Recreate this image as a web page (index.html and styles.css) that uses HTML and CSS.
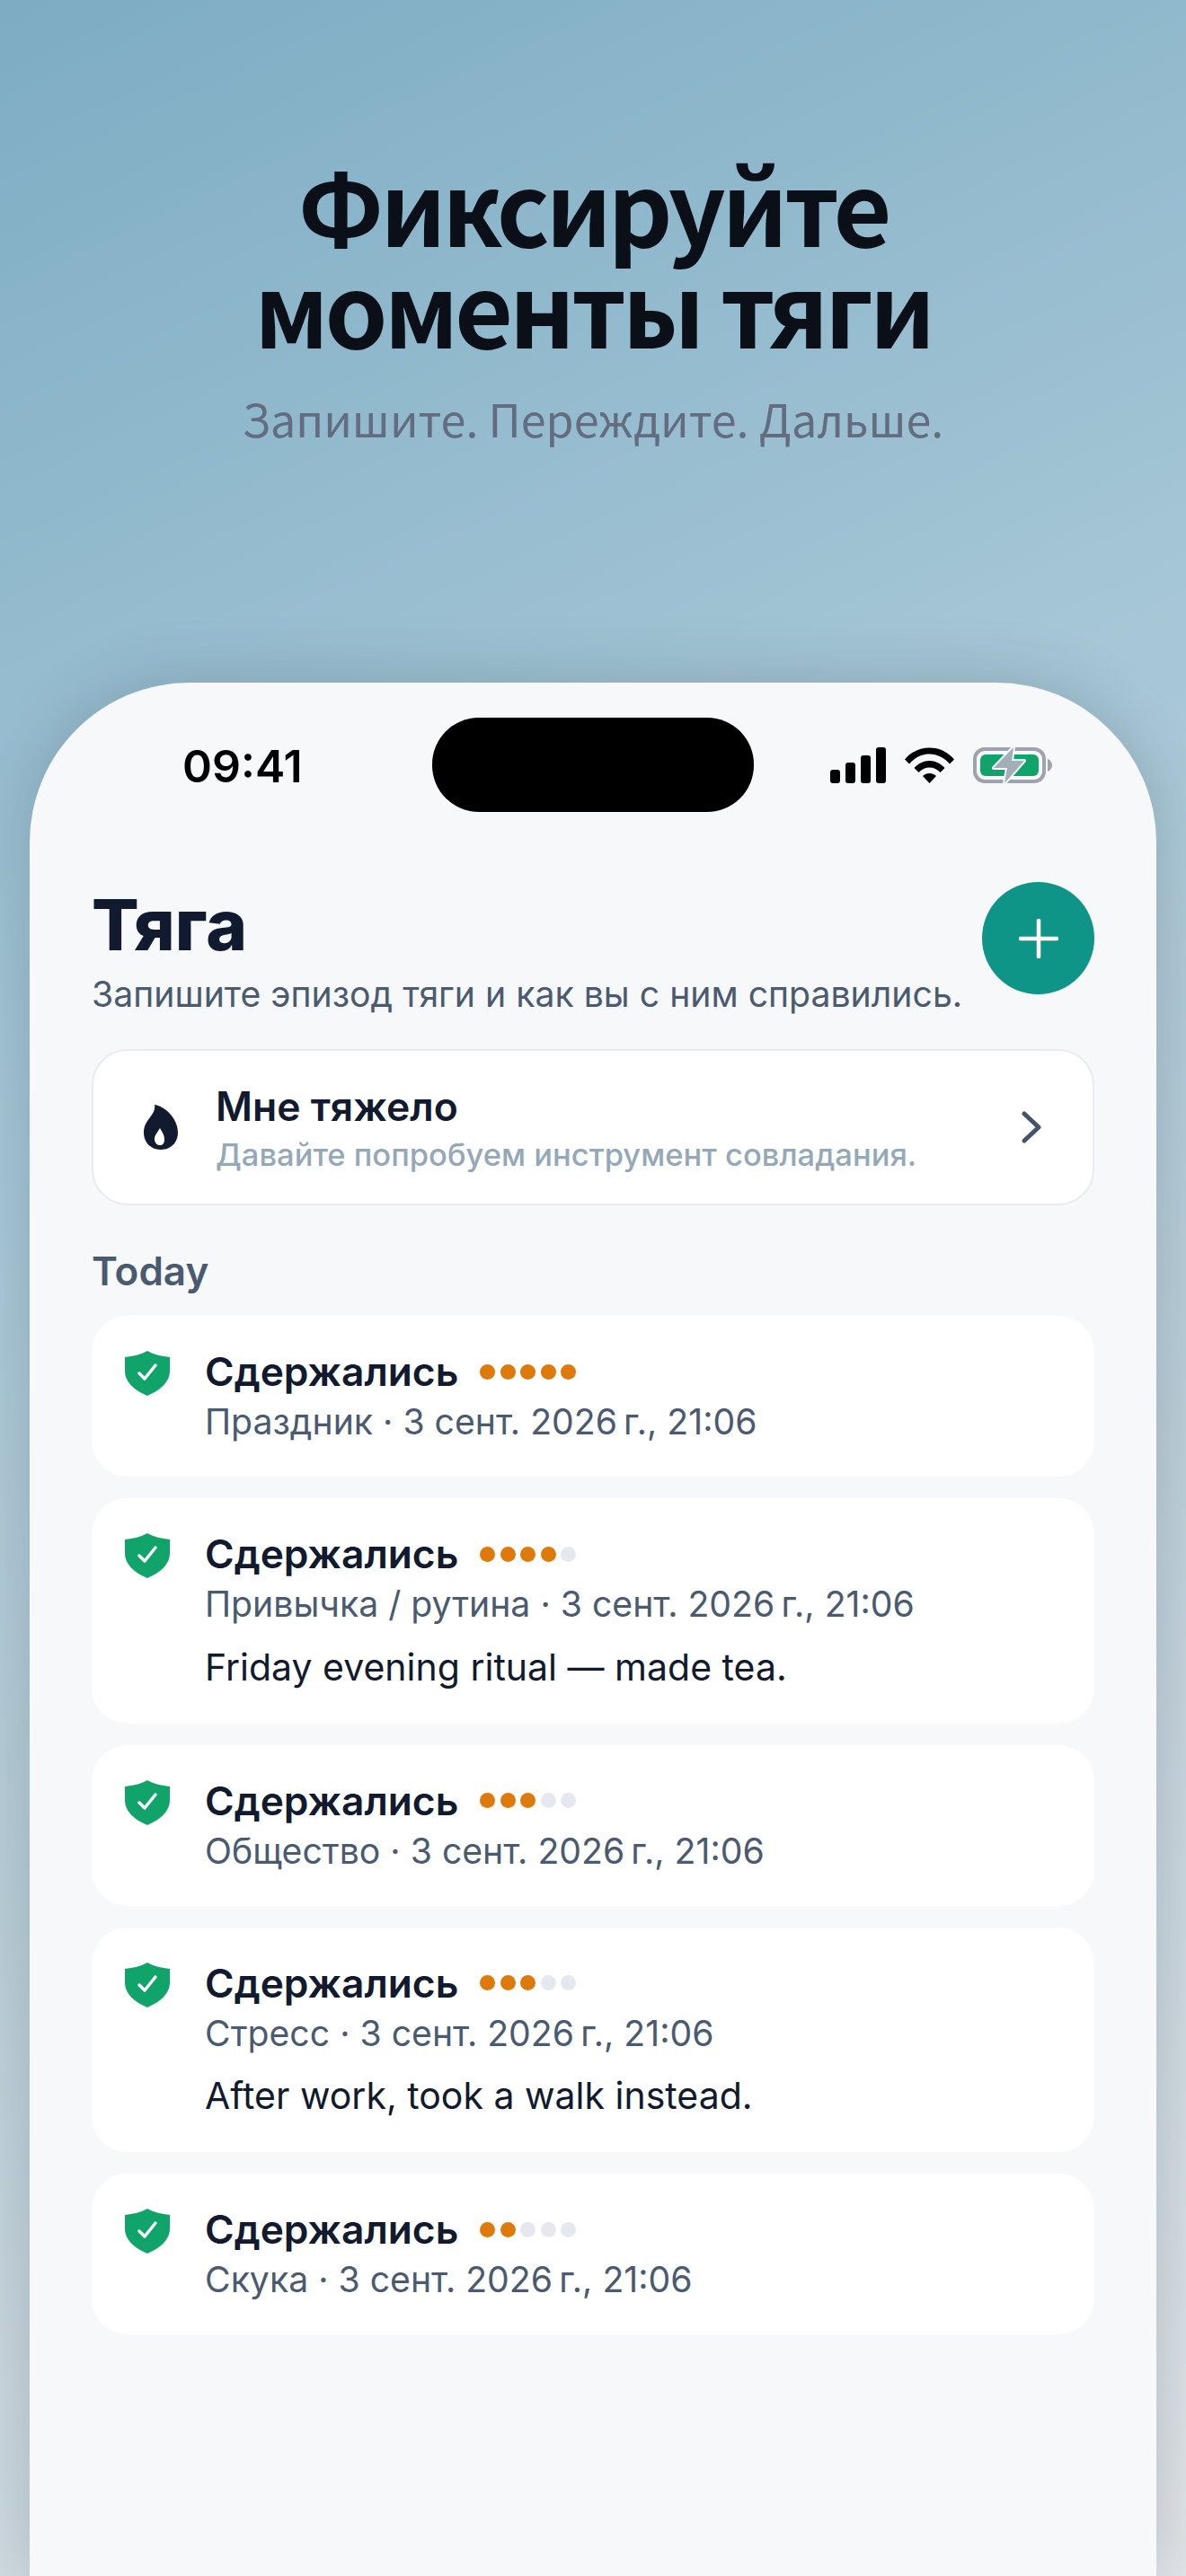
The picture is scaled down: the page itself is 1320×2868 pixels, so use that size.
FILE: index.html
```html
<!DOCTYPE html>
<html lang="ru">
<head>
<meta charset="utf-8">
<title>Тяга</title>
<link rel="stylesheet" href="styles.css">
</head>
<body>
<header class="hero">
  <h1 class="hero-title">Фиксируйте<br>моменты тяги</h1>
  <p class="hero-sub">Запишите. Переждите. Дальше.</p>
</header>
<main class="phone">
  <div class="status">
    <span class="time">09:41</span>
    <div class="island"></div>
    <div class="status-icons">
      <svg class="signal" width="62" height="40" viewBox="0 0 62 40"><rect x="0" y="25" width="11" height="15" rx="3"/><rect x="17" y="17" width="11" height="23" rx="3"/><rect x="34" y="9" width="11" height="31" rx="3"/><rect x="51" y="0" width="11" height="40" rx="3"/></svg>
      <svg class="wifi" width="55" height="40" viewBox="0 0 55 40"><path d="M0 13.500C7 5 17 0.500 27.500 0.500S48 5 55 13.500L50 18.500C44 11.500 36 7.500 27.500 7.500S11 11.500 5 18.500Z"/><path d="M10.500 23C15 18 21 15 27.500 15S40 18 44.500 23L39.500 28C36.500 24.500 32 22.500 27.500 22.500S18.500 24.500 15.500 28Z"/><path d="M20 32C22 30 24.500 29 27.500 29S33 30 35 32L27.500 40Z"/></svg>
      <svg class="battery" width="88" height="42" viewBox="0 0 88 42"><rect x="2" y="3" width="77" height="36" rx="11" fill="none" stroke="#9ca3af" stroke-width="4"/><path d="M83 14C86 15 88 18 88 21S86 27 83 28Z" fill="#9ca3af"/><rect x="8" y="9" width="65" height="24" rx="6" fill="#10a36a"/><path d="M45 1L23 24H38L35 41L57 16H43Z" fill="#a3aeb9" stroke="#f7f8fa" stroke-width="4" stroke-linejoin="round" paint-order="stroke"/></svg>
    </div>
  </div>
  <div class="content">
    <div class="page-head">
      <div class="page-titles">
        <h2 class="page-title">Тяга</h2>
        <p class="page-sub">Запишите эпизод тяги и как вы с ним справились.</p>
      </div>
      <div class="add-btn"><svg width="44" height="44" viewBox="0 0 44 44"><path d="M22 2V42M2 22H42" fill="none" stroke="#fff" stroke-width="4.500" stroke-linecap="round"/></svg></div>
    </div>
    <div class="hard-card">
      <svg class="flame" width="38" height="50" viewBox="0 0 38 50"><path fill-rule="evenodd" d="M12 0C22 1 38 14 38 31C38 42 30 50 19 50S0 42 0 31C0 24 3 19 7 14C10 10 13 6 12 0ZM18 26C15 31 12 34 12 38C12 42 14 45 18 45S23 42 23 38C23 34 21 31 18 26Z" fill="#111a2e"/></svg>
      <div class="hard-text">
        <div class="hard-title">Мне тяжело</div>
        <div class="hard-sub">Давайте попробуем инструмент совладания.</div>
      </div>
      <svg class="chevron" width="24" height="38" viewBox="0 0 24 38"><path d="M4 4L20 19L4 34" fill="none" stroke="#44546a" stroke-width="5" stroke-linecap="round" stroke-linejoin="round"/></svg>
    </div>
    <div class="section">Today</div>
    <div class="list">
      <article class="item">
        <svg class="shield" width="50" height="50" viewBox="0 0 50 50"><path d="M25 0C32 4 41 6 50 7V22C50 35 39 44 25 50C11 44 0 35 0 22V7C9 6 18 4 25 0Z" fill="#10a36a"/><path d="M16 25L22 31L34 16" fill="none" stroke="#fff" stroke-width="3.500" stroke-linecap="round" stroke-linejoin="round"/></svg>
        <div class="item-body">
          <div class="item-head"><span class="item-title">Сдержались</span><span class="dots"><i class="dot on"></i><i class="dot on"></i><i class="dot on"></i><i class="dot on"></i><i class="dot on"></i></span></div>
          <div class="item-meta">Праздник · 3 сент. 2026&#8239;г., 21:06</div>
        </div>
      </article>
      <article class="item">
        <svg class="shield" width="50" height="50" viewBox="0 0 50 50"><path d="M25 0C32 4 41 6 50 7V22C50 35 39 44 25 50C11 44 0 35 0 22V7C9 6 18 4 25 0Z" fill="#10a36a"/><path d="M16 25L22 31L34 16" fill="none" stroke="#fff" stroke-width="3.500" stroke-linecap="round" stroke-linejoin="round"/></svg>
        <div class="item-body">
          <div class="item-head"><span class="item-title">Сдержались</span><span class="dots"><i class="dot on"></i><i class="dot on"></i><i class="dot on"></i><i class="dot on"></i><i class="dot"></i></span></div>
          <div class="item-meta">Привычка / рутина · 3 сент. 2026&#8239;г., 21:06</div>
          <div class="item-note">Friday evening ritual — made tea.</div>
        </div>
      </article>
      <article class="item">
        <svg class="shield" width="50" height="50" viewBox="0 0 50 50"><path d="M25 0C32 4 41 6 50 7V22C50 35 39 44 25 50C11 44 0 35 0 22V7C9 6 18 4 25 0Z" fill="#10a36a"/><path d="M16 25L22 31L34 16" fill="none" stroke="#fff" stroke-width="3.500" stroke-linecap="round" stroke-linejoin="round"/></svg>
        <div class="item-body">
          <div class="item-head"><span class="item-title">Сдержались</span><span class="dots"><i class="dot on"></i><i class="dot on"></i><i class="dot on"></i><i class="dot"></i><i class="dot"></i></span></div>
          <div class="item-meta">Общество · 3 сент. 2026&#8239;г., 21:06</div>
        </div>
      </article>
      <article class="item">
        <svg class="shield" width="50" height="50" viewBox="0 0 50 50"><path d="M25 0C32 4 41 6 50 7V22C50 35 39 44 25 50C11 44 0 35 0 22V7C9 6 18 4 25 0Z" fill="#10a36a"/><path d="M16 25L22 31L34 16" fill="none" stroke="#fff" stroke-width="3.500" stroke-linecap="round" stroke-linejoin="round"/></svg>
        <div class="item-body">
          <div class="item-head"><span class="item-title">Сдержались</span><span class="dots"><i class="dot on"></i><i class="dot on"></i><i class="dot on"></i><i class="dot"></i><i class="dot"></i></span></div>
          <div class="item-meta">Стресс · 3 сент. 2026&#8239;г., 21:06</div>
          <div class="item-note">After work, took a walk instead.</div>
        </div>
      </article>
      <article class="item">
        <svg class="shield" width="50" height="50" viewBox="0 0 50 50"><path d="M25 0C32 4 41 6 50 7V22C50 35 39 44 25 50C11 44 0 35 0 22V7C9 6 18 4 25 0Z" fill="#10a36a"/><path d="M16 25L22 31L34 16" fill="none" stroke="#fff" stroke-width="3.500" stroke-linecap="round" stroke-linejoin="round"/></svg>
        <div class="item-body">
          <div class="item-head"><span class="item-title">Сдержались</span><span class="dots"><i class="dot on"></i><i class="dot on"></i><i class="dot"></i><i class="dot"></i><i class="dot"></i></span></div>
          <div class="item-meta">Скука · 3 сент. 2026&#8239;г., 21:06</div>
        </div>
      </article>
    </div>
  </div>
</main>
</body>
</html>
```
FILE: styles.css
```css
* { box-sizing: border-box; }
html, body { margin: 0; padding: 0; }
body {
  width: 1320px;
  height: 2868px;
  overflow: hidden;
  background: linear-gradient(155deg, #7dacc3 0%, #a5c6d6 36%, #bccfd9 62%, #e2e5e8 100%);
  font-family: Inter, "Noto Sans", sans-serif;
  color: #111a2e;
}
.hero {
  height: 760px;
  padding-top: 170px;
  text-align: center;
  font-family: "Noto Sans CJK SC", "Noto Sans", sans-serif;
}
.hero-title {
  margin: 0;
  font-size: 112px;
  line-height: 113px;
  letter-spacing: -4.3px;
  font-weight: 700;
  color: #0b0f17;
}
.hero-sub {
  margin: 36px 0 0;
  font-size: 50.2px;
  line-height: 66px;
  font-weight: 400;
  color: #636d7f;
}
.phone {
  width: 1254px;
  height: 2108px;
  margin: 0 33px;
  background: #f7f8fa;
  border-radius: 178px 178px 0 0;
  box-shadow: 0 0 70px rgba(30, 50, 65, 0.22);
  overflow: hidden;
}
.status {
  height: 190px;
  padding: 39px 116px 0 170px;
  display: flex;
  align-items: flex-start;
}
.time {
  margin-top: 23px;
  font-size: 50px;
  line-height: 62px;
  font-weight: 600;
  color: #000;
  width: 278px;
}
.island {
  width: 358px;
  height: 105px;
  border-radius: 52px;
  background: #000;
}
.status-icons {
  margin-top: 32px;
  margin-left: auto;
  display: flex;
  align-items: center;
  gap: 21px;
}
.content { padding: 0 69px; }
.page-head {
  display: flex;
  justify-content: space-between;
  align-items: flex-start;
  height: 218px;
}
.page-title {
  margin: 0;
  padding-top: 33px;
  font-size: 78px;
  line-height: 94px;
  font-weight: 800;
  color: #111a2e;
}
.page-sub {
  margin: 5px 0 0;
  font-size: 39.2px;
  line-height: 50px;
  color: #4a5a70;
}
.add-btn {
  flex: none;
  width: 125px;
  height: 125px;
  margin-top: 32px;
  border-radius: 50%;
  background: #0f9488;
  display: flex;
  align-items: center;
  justify-content: center;
}
.hard-card {
  height: 174px;
  background: #fff;
  border: 2px solid #e8ebf0;
  border-radius: 40px;
  padding: 0 56px;
  display: flex;
  align-items: center;
}
.flame { flex: none; }
.hard-text { flex: 1; margin-left: 42px; padding-top: 3px; }
.hard-title {
  font-size: 44.5px;
  line-height: 54px;
  font-weight: 600;
  color: #111a2e;
}
.hard-sub {
  margin-top: 5px;
  font-size: 34.5px;
  line-height: 44px;
  font-weight: 500;
  color: #94a8b8;
}
.section {
  margin-top: 47px;
  font-size: 44px;
  line-height: 52px;
  font-weight: 600;
  color: #4a5a70;
}
.list {
  margin-top: 24px;
  display: flex;
  flex-direction: column;
  gap: 24px;
}
.item {
  background: #fff;
  border-radius: 40px;
  padding: 31px 37px 36px;
  display: flex;
  align-items: flex-start;
}
.shield { flex: none; margin-top: 8px; }
.item-body { margin-left: 39px; }
.item-head { display: flex; align-items: center; height: 62px; }
.item-title {
  font-size: 44.3px;
  line-height: 62px;
  font-weight: 600;
  color: #111a2e;
}
.dots { display: flex; gap: 5.5px; margin-left: 24px; }
.dot { width: 17px; height: 17px; border-radius: 50%; background: #e5e8ee; }
.dot.on { background: #de7a0c; }
.item-meta {
  font-size: 39.2px;
  line-height: 50px;
  color: #4a5a70;
}
.item-note {
  margin-top: 17.5px;
  font-size: 41px;
  line-height: 54px;
  color: #111a2e;
}
```
